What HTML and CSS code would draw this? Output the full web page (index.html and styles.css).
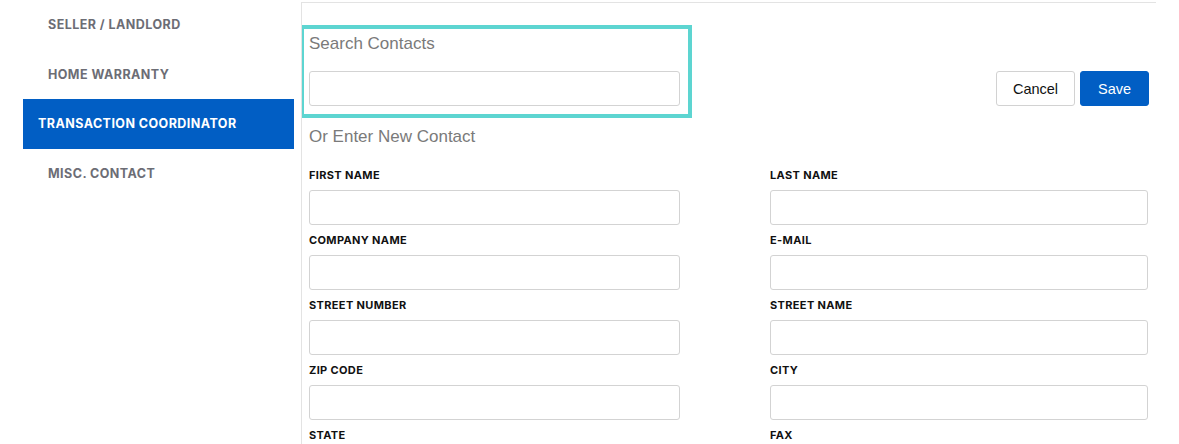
FILE: index.html
```html
<!DOCTYPE html>
<html>
<head>
<meta charset="utf-8">
<link rel="stylesheet" href="styles.css">
</head>
<body>
<div class="page">
  <nav class="sidebar">
    <div class="nav-item">SELLER / LANDLORD</div>
    <div class="nav-item">HOME WARRANTY</div>
    <div class="nav-item active">TRANSACTION COORDINATOR</div>
    <div class="nav-item">MISC. CONTACT</div>
  </nav>
  <main class="panel">
    <div class="top-row">
      <div class="search-box">
        <div class="section-title">Search Contacts</div>
        <input class="search-input" type="text">
      </div>
      <div class="actions">
        <button class="btn btn-cancel">Cancel</button>
        <button class="btn btn-save">Save</button>
      </div>
    </div>
    <div class="section-title new-title">Or Enter New Contact</div>
    <div class="form-grid">
      <div class="form-group"><label class="label">FIRST NAME</label><input class="field" type="text"></div>
      <div class="form-group"><label class="label">LAST NAME</label><input class="field" type="text"></div>
      <div class="form-group"><label class="label">COMPANY NAME</label><input class="field" type="text"></div>
      <div class="form-group"><label class="label">E-MAIL</label><input class="field" type="text"></div>
      <div class="form-group"><label class="label">STREET NUMBER</label><input class="field" type="text"></div>
      <div class="form-group"><label class="label">STREET NAME</label><input class="field" type="text"></div>
      <div class="form-group"><label class="label">ZIP CODE</label><input class="field" type="text"></div>
      <div class="form-group"><label class="label">CITY</label><input class="field" type="text"></div>
      <div class="form-group"><label class="label">STATE</label><input class="field" type="text"></div>
      <div class="form-group"><label class="label">FAX</label><input class="field" type="text"></div>
    </div>
  </main>
</div>
</body>
</html>
```

FILE: styles.css
```css
* { box-sizing: border-box; }
html, body { margin: 0; padding: 0; background: #fff; }
body { width: 1179px; height: 444px; overflow: hidden; font-family: "Liberation Sans", Arial, sans-serif; }

.page { display: flex; align-items: flex-start; height: 444px; overflow: hidden; }

.sidebar {
  width: 294px;
  padding-left: 23px;
  flex: none;
}
.nav-item {
  height: 49.5px;
  display: flex;
  align-items: center;
  padding-left: 25px;
  font-family: Inter, "DejaVu Sans", sans-serif;
  font-weight: 700;
  font-size: 12.5px;
  letter-spacing: 0.45px;
  color: #6c6d75;
}
.nav-item.active {
  background: #015ec4;
  color: #fff;
  padding-left: 15px;
}

.panel {
  margin-left: 7px;
  margin-top: 2px;
  width: 855px;
  height: 442px;
  overflow: hidden;
  border-left: 1px solid #e3e3e3;
  border-top: 1px solid #e3e3e3;
  padding: 0 7px 0 7px;
}

.top-row {
  display: flex;
  justify-content: space-between;
  align-items: flex-end;
  margin-top: 26px;
  padding-left: 0;
}
.search-box {
  margin-left: -5px;
  margin-top: 0;
  width: 384px;
  padding: 5px 8px 8px 5px;
  outline: 4px solid #5dd5d1;
}
.section-title {
  font-size: 17px;
  line-height: 20px;
  color: #7a7a7a;
  font-weight: 300;
}
.search-input {
  display: block;
  width: 371px;
  height: 35px;
  margin-top: 17px;
  border: 1px solid #d3d3d3;
  border-radius: 3px;
  background: #fff;
  padding: 0 8px;
  font-size: 14px;
}

.actions { display: flex; gap: 5px; margin-bottom: 8px; }
.btn {
  height: 35px;
  font-family: "Liberation Sans", Arial, sans-serif;
  font-size: 14.5px;
  border-radius: 3px;
  cursor: pointer;
}
.btn-cancel {
  width: 79px;
  background: #fff;
  color: #111;
  border: 1px solid #d2d2d2;
}
.btn-save {
  width: 69px;
  background: #015ec4;
  color: #fff;
  border: 1px solid #015ec4;
}

.new-title { margin-top: 13px; }

.form-grid {
  display: grid;
  grid-template-columns: 371px 378px;
  column-gap: 90px;
  margin-top: 21px;
}
.form-group { display: flex; flex-direction: column; }
.label {
  font-family: Inter, "DejaVu Sans", sans-serif;
  font-weight: 700;
  font-size: 11px;
  line-height: 15px;
  letter-spacing: 0.35px;
  color: #111;
}
.field {
  height: 35px;
  border: 1px solid #d3d3d3;
  border-radius: 3px;
  background: #fff;
  margin-top: 7px;
  margin-bottom: 8px;
  padding: 0 8px;
  font-size: 14px;
}
```
